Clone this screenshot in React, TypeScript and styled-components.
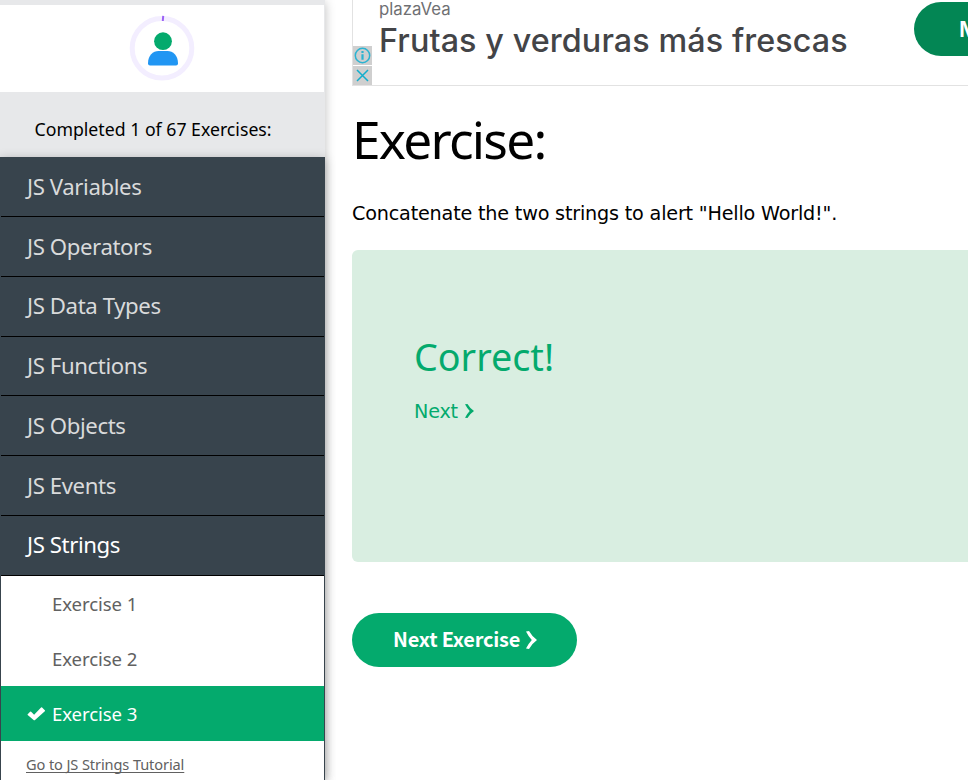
import React from "react";
import styled, { createGlobalStyle } from "styled-components";

const GlobalStyle = createGlobalStyle`
  html, body {
    margin: 0;
    height: 780px;
    overflow: hidden;
    background: #fff;
  }
  * { box-sizing: border-box; }
`;

const Page = styled.div`
  display: flex;
  width: 968px;
  height: 780px;
  overflow: hidden;
  font-family: "Noto Sans", "Open Sans", sans-serif;
  color: #000;
`;

const Sidebar = styled.aside`
  display: flex;
  flex-direction: column;
  flex: 0 0 325px;
  height: 780px;
  background: #e7e8ea;
  box-shadow: 0 2px 10px rgba(0, 0, 0, 0.26);
`;

const Profile = styled.div`
  display: flex;
  justify-content: center;
  width: 324px;
  height: 87px;
  margin-top: 5px;
  padding-top: 10px;
  background: #fff;
  flex: none;
`;

const Progress = styled.div`
  height: 65.4px;
  flex: none;
  padding: 25px 0 0 34.5px;
  font-size: 17.7px;
  line-height: 24px;
  letter-spacing: 0;
  white-space: nowrap;
`;

const Topics = styled.nav`
  display: flex;
  flex-direction: column;
  flex: 1;
  padding: 0 1px;
  background: #38444d;
  box-shadow: 0 2px 10px rgba(0, 0, 0, 0.26);
  clip-path: inset(-12px -12px 0 0);
`;

const Topic = styled.a<{ $active?: boolean }>`
  flex: none;
  height: 59.75px;
  padding: 13.6px 0 0 26px;
  border-bottom: 1px solid #000;
  font-size: 22.2px;
  line-height: 32px;
  letter-spacing: -0.4px;
  white-space: nowrap;
  color: ${(p) => (p.$active ? "#fff" : "#d9dadb")};
`;

const ExerciseList = styled.div`
  flex: 1;
  background: #fff;
`;

const ExerciseItem = styled.a<{ $current?: boolean }>`
  display: flex;
  align-items: center;
  height: 55px;
  padding: 0 0 0 25px;
  font-size: 18.6px;
  letter-spacing: -0.1px;
  color: ${(p) => (p.$current ? "#fff" : "#616161")};
  background: ${(p) => (p.$current ? "#04aa6d" : "transparent")};
`;

const CheckSlot = styled.span`
  display: flex;
  align-items: center;
  width: 26px;
  padding-top: 1px;
`;

const TutorialLink = styled.a`
  display: block;
  padding: 13px 0 0 25px;
  font-size: 14.6px;
  line-height: 20px;
  letter-spacing: -0.11px;
  text-decoration: underline;
  text-decoration-thickness: 1px;
  text-decoration-skip-ink: none;
  text-underline-offset: 2px;
  white-space: nowrap;
  color: #616161;
`;

const Main = styled.main`
  display: flex;
  flex-direction: column;
  align-items: flex-start;
  flex: 1;
  min-width: 0;
  padding-left: 27px;
  overflow: hidden;
`;

const Ad = styled.section`
  display: flex;
  width: 640px;
  height: 86px;
  flex: none;
  border-left: 1px solid #e2e2e2;
  border-bottom: 1px solid #e2e2e2;
  font-family: Inter, "Open Sans", sans-serif;
`;

const AdControls = styled.div`
  display: flex;
  flex-direction: column;
  justify-content: flex-end;
  gap: 1px;
  width: 19px;
  flex: none;
`;

const AdControl = styled.span`
  display: flex;
  width: 19px;
  height: 19px;
  background: #cfcfcf;
`;

const AdCopy = styled.div`
  width: 542px;
  padding-left: 7px;
  flex: none;
  white-space: nowrap;
`;

const Advertiser = styled.div`
  height: 20px;
  font-size: 16.8px;
  line-height: 18px;
  color: #6f7073;
`;

const AdTitle = styled.div`
  font-size: 32.3px;
  font-weight: 500;
  line-height: 42px;
  letter-spacing: 0.1px;
  color: #434447;
`;

const AdButton = styled.div`
  width: 160px;
  height: 54px;
  margin-top: 2px;
  padding-left: 45px;
  flex: none;
  border-radius: 27px;
  background: #038654;
  color: #fff;
  font-size: 22px;
  font-weight: 600;
  line-height: 54px;
`;

const Heading = styled.h1`
  margin: 17px 0 0 0;
  height: 72px;
  font-size: 51.4px;
  font-weight: 400;
  line-height: 72px;
  letter-spacing: -1.75px;
`;

const Task = styled.p`
  margin: 27px 0 0;
  height: 24px;
  font-family: "DejaVu Sans", sans-serif;
  font-size: 19.2px;
  line-height: 24px;
  letter-spacing: -0.19px;
  white-space: nowrap;
`;

const ResultPanel = styled.section`
  width: 640px;
  height: 312px;
  flex: none;
  margin-top: 24px;
  padding: 80px 0 0 62px;
  border-radius: 6px;
  background: #d9eee1;
  color: #04aa6d;
`;

const ResultTitle = styled.h2`
  margin: 0;
  font-size: 37.7px;
  font-weight: 400;
  line-height: 54px;
  letter-spacing: 0;
`;

const NextLink = styled.a`
  display: flex;
  align-items: center;
  gap: 7px;
  height: 24px;
  margin-top: 15px;
  font-family: "DejaVu Sans", sans-serif;
  font-size: 19.2px;
  letter-spacing: -0.2px;
`;

const NextButton = styled.button`
  display: flex;
  align-items: center;
  gap: 6px;
  width: 225px;
  height: 54px;
  margin-top: 51px;
  padding: 0 0 4px 41px;
  flex: none;
  border: 0;
  border-radius: 27px;
  background: #04aa6d;
  color: #fff;
  font-family: "Noto Sans CJK SC", sans-serif;
  font-size: 19.9px;
  font-weight: 700;
  letter-spacing: -0.18px;
  white-space: nowrap;

  svg { margin-top: 3px; }
`;

const topics = [
  "JS Variables",
  "JS Operators",
  "JS Data Types",
  "JS Functions",
  "JS Objects",
  "JS Events",
  "JS Strings",
];
const exercises = ["Exercise 1", "Exercise 2", "Exercise 3"];

const Avatar = () => (
  <svg width="66" height="68" viewBox="0 0 66 68">
    <circle cx="33" cy="33.3" r="29.8" fill="none" stroke="#f3eeff" strokeWidth="5" />
    <path d="M34.2 .8 33.8 6" stroke="#9b62f5" strokeWidth="2" />
    <circle cx="34" cy="26.2" r="8.9" fill="#04aa6d" />
    <path d="M19 48.2C19 40.5 24 36 29.5 36h9C44 36 49 40.5 49 48.2Q49 50.4 47 50.4H21Q19 50.4 19 48.2Z" fill="#2196f3" />
  </svg>
);

const Check = () => (
  <svg width="20" height="15" viewBox="0 0 19 14">
    <path d="M1.6 7.6 3.9 5.3Q4.4 4.9 4.9 5.3L7.7 8.1 14.3 1.3Q14.8.9 15.3 1.3L17.9 3.8Q18.3 4.3 17.9 4.8L8.3 13.3Q7.7 13.7 7.2 13.2L1.6 8.5Q1.2 8.1 1.6 7.6Z" fill="#fff" />
  </svg>
);

const Chevron = ({ width, height }: { width: number; height: number }) => (
  <svg width={width} height={height} viewBox="0 0 11 18" preserveAspectRatio="none">
    <path d="M0 .4 3 0Q6 5.4 11 9 6 12.6 3 18L0 17.6Q2.6 12.4 5.8 9 2.6 5.6 0 .4Z" fill="currentColor" />
  </svg>
);

export default function App() {
  return (
    <>
      <GlobalStyle />
      <Page>
        <Sidebar>
          <Profile>
            <Avatar />
          </Profile>
          <Progress>Completed 1 of 67 Exercises:</Progress>
          <Topics>
            {topics.map((name) => (
              <Topic key={name} $active={name === "JS Strings"}>
                {name}
              </Topic>
            ))}
            <ExerciseList>
              {exercises.map((name) => {
                const current = name === "Exercise 3";
                return (
                  <ExerciseItem key={name} $current={current}>
                    <CheckSlot>{current && <Check />}</CheckSlot>
                    {name}
                  </ExerciseItem>
                );
              })}
              <TutorialLink>Go to JS Strings Tutorial</TutorialLink>
            </ExerciseList>
          </Topics>
        </Sidebar>
        <Main>
          <Ad>
            <AdControls>
              <AdControl>
                <svg width="19" height="19" viewBox="0 0 19 19">
                  <circle cx="9.5" cy="9.5" r="7.2" fill="none" stroke="#2bb3d1" strokeWidth="1.5" />
                  <path d="M9.5 5v2M9.5 8.2v5.6" stroke="#2bb3d1" strokeWidth="2.2" />
                </svg>
              </AdControl>
              <AdControl>
                <svg width="19" height="19" viewBox="0 0 19 19">
                  <path d="M4 4 15 15M15 4 4 15" stroke="#12aecd" strokeWidth="1.5" />
                </svg>
              </AdControl>
            </AdControls>
            <AdCopy>
              <Advertiser>plazaVea</Advertiser>
              <AdTitle>Frutas y verduras más frescas</AdTitle>
            </AdCopy>
            <AdButton>M</AdButton>
          </Ad>
          <Heading>Exercise:</Heading>
          <Task>Concatenate the two strings to alert "Hello World!".</Task>
          <ResultPanel>
            <ResultTitle>Correct!</ResultTitle>
            <NextLink>
              Next
              <Chevron width={9} height={14} />
            </NextLink>
          </ResultPanel>
          <NextButton>
            Next Exercise
            <Chevron width={11} height={18} />
          </NextButton>
        </Main>
      </Page>
    </>
  );
}
